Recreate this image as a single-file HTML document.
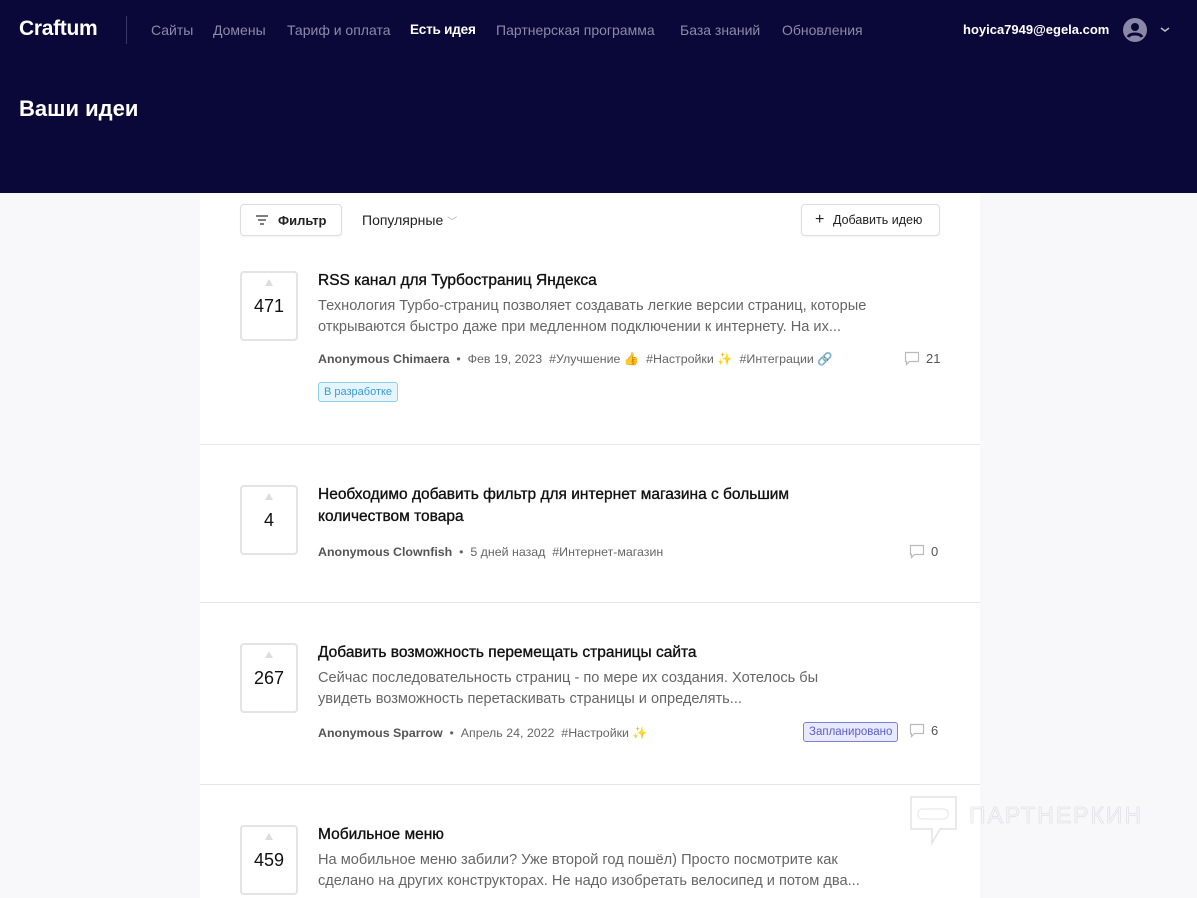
<!DOCTYPE html>
<html><head><meta charset="utf-8"><style>
*{box-sizing:border-box;margin:0;padding:0}
body{width:1197px;height:898px;overflow:hidden;background:#f8f8fb;font-family:"Liberation Sans",sans-serif;position:relative}
.hdr{position:absolute;left:0;top:0;width:1197px;height:193px;background:#0a0838}
.logo{position:absolute;left:19px;top:17px;color:#fff;font-size:21px;font-weight:bold;letter-spacing:-0.3px}
.vsep{position:absolute;left:126px;top:16px;width:1px;height:28px;background:#3a3866}
.nav{position:absolute;top:22px;font-size:14px;color:#8c8aa8;white-space:nowrap}
.nav.act{color:#fff;font-weight:bold;font-size:13.5px;letter-spacing:-0.2px}
h1{position:absolute;left:19px;top:96px;color:#fff;font-size:22px;font-weight:bold}
.email{position:absolute;left:963px;top:22px;color:#fff;font-size:13px;font-weight:bold}
.card{position:absolute;left:200px;top:193px;width:780px;height:705px;background:#fff}
.btn{position:absolute;border:1px solid #dcdce2;border-radius:4px;background:#fff;font-size:13px;color:#222;box-shadow:0 1px 2px rgba(0,0,0,.05)}
.vote{position:absolute;left:40px;width:58px;height:70px;border:2px solid #e3e3e8;border-radius:4px;text-align:center}
.vote .ar{position:absolute;left:23px;top:6px;width:0;height:0;border-left:4px solid transparent;border-right:4px solid transparent;border-bottom:7px solid #ddd}
.vote .n{position:absolute;left:0;right:0;top:23px;font-size:18px;color:#111}
.t{position:absolute;left:118px;font-size:15.5px;color:#111;line-height:22px;width:560px;-webkit-text-stroke:0.35px #111}
.d{position:absolute;left:118px;font-size:14.6px;color:#666;line-height:21px;width:600px;white-space:nowrap}
.m{position:absolute;left:118px;font-size:12.4px;color:#666;white-space:nowrap}
.m b{color:#555}
.sep{position:absolute;left:0;width:780px;height:1px;background:#e6e6ea}
.cm{position:absolute;font-size:13px;color:#555}
.cm svg{vertical-align:-3px;margin-right:6px}
.tag{position:absolute;font-size:11px;border-radius:3px;padding:3px 5px}
</style></head><body>
<div class="hdr">
<div class="logo">Craftum</div><div class="vsep"></div>
<div class="nav" style="left:151px">Сайты</div>
<div class="nav" style="left:213px">Домены</div>
<div class="nav" style="left:287px">Тариф и оплата</div>
<div class="nav act" style="left:410px">Есть идея</div>
<div class="nav" style="left:496px">Партнерская программа</div>
<div class="nav" style="left:680px">База знаний</div>
<div class="nav" style="left:782px">Обновления</div>
<div class="email">hoyica7949@egela.com</div>
<svg style="position:absolute;left:1123px;top:18px" width="24" height="24" viewBox="0 0 24 24"><circle cx="12" cy="12" r="12" fill="#8a88a6"/><circle cx="12" cy="9" r="4" fill="#0a0838"/><path d="M5 19c2-4 12-4 14 0" stroke="#0a0838" stroke-width="3" fill="none"/></svg>
<svg style="position:absolute;left:1160px;top:27px" width="10" height="6" viewBox="0 0 10 6"><path d="M1 1l4 3 4-3" stroke="#bbb" stroke-width="1.5" fill="none"/></svg>
<h1>Ваши идеи</h1>
</div>
<div class="card">
<div class="btn" style="left:40px;top:11px;width:102px;height:32px"><svg style="position:absolute;left:15px;top:10px" width="12" height="10"><path d="M0 1h12M2 5h8M4 9h4" stroke="#333" stroke-width="1.3"/></svg><span style="position:absolute;left:37px;top:8px;font-weight:bold">Фильтр</span></div>
<div style="position:absolute;left:162px;top:19px;font-size:14px;color:#222">Популярные <span style="color:#aaa;font-size:10px">﹀</span></div>
<div class="btn" style="left:601px;top:11px;width:139px;height:32px"><span style="position:absolute;left:13px;top:6px;font-size:16px">+</span><span style="position:absolute;left:31px;top:8px;font-size:12.5px">Добавить идею</span></div>

<div class="vote" style="top:78px"><div class="ar"></div><div class="n">471</div></div>
<div class="t" style="top:77px">RSS канал для Турбостраниц Яндекса</div>
<div class="d" style="top:103px">Технология Турбо-страниц позволяет создавать легкие версии страниц, которые<br>открываются быстро даже при медленном подключении к интернету. На их...</div>
<div class="m" style="top:159px"><b>Anonymous Chimaera</b> &nbsp;•&nbsp; Фев 19, 2023 &nbsp;#Улучшение 👍 &nbsp;#Настройки ✨ &nbsp;#Интеграции 🔗</div>
<div class="cm" style="left:704px;top:158px"><svg width="16" height="15"><path d="M1.5 1.5h13v9h-9l-3 3v-3h-1z" fill="none" stroke="#bbb" stroke-width="1.2"/></svg>21</div>
<div class="tag" style="left:118px;top:189px;background:#e5f5fd;border:1px solid #8fd0f0;color:#3a9bd4">В разработке</div>
<div class="sep" style="top:251px"></div>

<div class="vote" style="top:292px"><div class="ar"></div><div class="n">4</div></div>
<div class="t" style="top:291px">Необходимо добавить фильтр для интернет магазина с большим<br>количеством товара</div>
<div class="m" style="top:352px"><b>Anonymous Clownfish</b> &nbsp;•&nbsp; 5 дней назад &nbsp;#Интернет-магазин</div>
<div class="cm" style="left:709px;top:351px"><svg width="16" height="15"><path d="M1.5 1.5h13v9h-9l-3 3v-3h-1z" fill="none" stroke="#bbb" stroke-width="1.2"/></svg>0</div>
<div class="sep" style="top:409px"></div>

<div class="vote" style="top:450px"><div class="ar"></div><div class="n">267</div></div>
<div class="t" style="top:449px">Добавить возможность перемещать страницы сайта</div>
<div class="d" style="top:475px">Сейчас последовательность страниц - по мере их создания. Хотелось бы<br>увидеть возможность перетаскивать страницы и определять...</div>
<div class="m" style="top:533px"><b>Anonymous Sparrow</b> &nbsp;•&nbsp; Апрель 24, 2022 &nbsp;#Настройки ✨</div>
<div class="tag" style="left:603px;top:529px;background:#e8e9fc;border:1px solid #7d7fdd;color:#5d60c8;font-size:11.5px">Запланировано</div>
<div class="cm" style="left:709px;top:530px"><svg width="16" height="15"><path d="M1.5 1.5h13v9h-9l-3 3v-3h-1z" fill="none" stroke="#bbb" stroke-width="1.2"/></svg>6</div>
<div class="sep" style="top:591px"></div>

<div class="vote" style="top:632px"><div class="ar"></div><div class="n">459</div></div>
<div class="t" style="top:631px">Мобильное меню</div>
<div class="d" style="top:657px">На мобильное меню забили? Уже второй год пошёл) Просто посмотрите как<br>сделано на других конструкторах. Не надо изобретать велосипед и потом два...</div>
</div>
<svg style="position:absolute;left:910px;top:796px" width="48" height="50"><path d="M1 1h45v32h-16l-8 14v-14h-21z" fill="none" stroke="#e4e4e8" stroke-width="1.5"/><rect x="8" y="13" width="30" height="10" rx="4" fill="none" stroke="#e4e4e8"/></svg>
<div style="position:absolute;left:969px;top:802px;font-size:23px;color:transparent;-webkit-text-stroke:0.8px #e2e2e6;letter-spacing:2px">ПАРТНЕРКИН</div>
</body></html>
